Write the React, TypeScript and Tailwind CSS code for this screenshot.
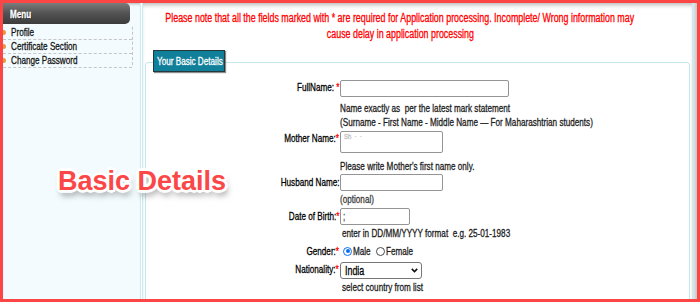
import React from "react";

type NP = { children: React.ReactNode; o?: string; className?: string };

function N({ children, o = "origin-left", className = "" }: NP) {
  return (
    <span className={"inline-block whitespace-nowrap scale-x-[0.74] [-webkit-text-stroke:0.3px_currentColor] " + o + " " + className}>
      {children}
    </span>
  );
}

const Star = () => <span className="text-[#ff0000]">*</span>;

function Label({ children, className = "" }: { children: React.ReactNode; className?: string }) {
  return (
    <div className={"w-[193px] shrink-0 flex justify-end text-[11px] leading-[14px] text-black " + className}>
      <N o="origin-right">{children}</N>
    </div>
  );
}

function Hint({ children, className = "" }: { children: React.ReactNode; className?: string }) {
  return (
    <div className={"text-[11px] leading-[14px] text-[#1c1c1c] " + className}>
      <N>{children}</N>
    </div>
  );
}

function Radio({ checked }: { checked?: boolean }) {
  return checked ? (
    <span className="w-[9px] h-[9px] shrink-0 rounded-full border-[1.5px] border-[#0b6ef5] bg-white flex items-center justify-center">
      <span className="w-[4px] h-[4px] rounded-full bg-[#0b6ef5]" />
    </span>
  ) : (
    <span className="w-[9px] h-[9px] shrink-0 rounded-full border border-[#4a4a4a] bg-white" />
  );
}

const menuItems = ["Profile", "Certificate Section", "Change Password"];

export default function App() {
  return (
    <div className="relative w-[700px] h-[302px] overflow-hidden border-[3px] border-[#fc4646] bg-white flex font-['Liberation_Sans',Arial,sans-serif]">
      {/* Sidebar */}
      <aside className="w-[138px] shrink-0 h-full bg-[#f3fbfe] border-r border-[#c8eef4] shadow-[inset_0_3px_3px_-2px_rgba(0,0,0,0.3)]">
        <div className="h-[21px] w-[127px] rounded-r-[5px] bg-linear-to-b from-[#7c7c7c] via-[#525252] to-[#3c3c3c] flex items-center pl-[7px] pt-[1px]">
          <N className="text-[11px] font-bold text-white [text-shadow:1px_1px_0_#222]">Menu</N>
        </div>
        <ul className="mt-[2px] w-[130px] border-r border-dashed border-[#c6c6c6] rounded-br-[3px]">
          {menuItems.map((t) => (
            <li key={t} className="h-[14px] flex items-center border-b border-dashed border-[#c6c6c6]">
              <span className="w-[3px] h-[5px] rounded-r-full bg-[#e8983a]" />
              <span className="ml-[5px] text-[11px] leading-[13px] text-[#141414]">
                <N>{t}</N>
              </span>
            </li>
          ))}
        </ul>
      </aside>

      {/* Main */}
      <div className="ml-[1px] flex-1 min-w-0 h-full flex">
        <main className="flex-1 min-w-0 h-full bg-white border-l border-r border-[#cdeaf0] shadow-[inset_0_4px_4px_-2px_rgba(0,0,0,0.28)]">
          <div className="pt-[7px] pr-[35px] flex flex-col items-center text-[12px] leading-[16px] text-[#ff0000]">
            <N o="origin-center">
              Please note that all the fields marked with * are required for Application processing. Incomplete/ Wrong information may
            </N>
            <N o="origin-center">cause delay in application processing</N>
          </div>

          <div className="mt-[8px] mx-[2px]">
            <div className="relative z-10 ml-[8px] -mb-[10px] w-[72px] h-[22px] bg-[#10809a] border border-[#26383c] shadow-[1px_1px_1px_rgba(0,0,0,0.45)] flex items-center pl-[3px]">
              <N className="text-[11px] leading-[14px] text-white">Your Basic Details</N>
            </div>
            <div className="border border-[#c3e7ee] rounded-[3px] pt-[17px] h-[300px]">
              {/* FullName */}
              <div className="flex">
                <Label>
                  FullName: <Star />
                </Label>
                <div className="ml-[1px] flex-1 min-w-0">
                  <div className="w-[169px] h-[17px] border border-[#949494] rounded-[2px] bg-white" />
                  <Hint className="mt-[4px]">Name exactly as&nbsp; per the latest mark statement</Hint>
                  <Hint>(Surname - First Name - Middle Name — For Maharashtrian students)</Hint>
                </div>
              </div>

              {/* Mother Name */}
              <div className="flex mt-[2px]">
                <Label>
                  Mother Name:<Star />
                </Label>
                <div className="ml-[1px] flex-1 min-w-0">
                  <div className="w-[103px] h-[22px] border border-[#949494] rounded-[2px] bg-white pl-[3px] text-[8px] leading-[10px] text-[#bdbdbd]">
                    <N>Sh&nbsp; · &nbsp;·</N>
                  </div>
                  <Hint className="mt-[6px]">Please write Mother's first name only.</Hint>
                </div>
              </div>

              {/* Husband Name */}
              <div className="flex mt-[1px]">
                <Label className="pt-[1px]">Husband Name:</Label>
                <div className="ml-[1px] flex-1 min-w-0">
                  <div className="w-[103px] h-[17px] border border-[#949494] rounded-[2px] bg-white" />
                  <Hint className="mt-[1px] text-[#3a3a3a]">(optional)</Hint>
                </div>
              </div>

              {/* Date of Birth */}
              <div className="flex mt-[2px]">
                <Label className="pt-[1px]">
                  Date of Birth:<Star />
                </Label>
                <div className="ml-[1px] flex-1 min-w-0">
                  <div className="w-[70px] h-[17px] border border-[#949494] rounded-[2px] bg-white pl-[2px] text-[11px] leading-[15px] text-[#555]">
                    <N>;</N>
                  </div>
                  <Hint className="mt-[1px] ml-[2px]">enter in DD/MM/YYYY format&nbsp; e.g. 25-01-1983</Hint>
                </div>
              </div>

              {/* Gender */}
              <div className="flex mt-[4px] h-[14px]">
                <Label>
                  Gender:<Star />
                </Label>
                <div className="ml-[4px] flex items-center text-[11px] leading-[14px] text-[#1c1c1c]">
                  <Radio checked />
                  <span className="ml-[1px] w-[23px]">
                    <N>Male</N>
                  </span>
                  <Radio />
                  <span className="ml-[1px]">
                    <N>Female</N>
                  </span>
                </div>
              </div>

              {/* Nationality */}
              <div className="flex mt-[4px]">
                <Label>
                  Nationality:<Star />
                </Label>
                <div className="ml-[1px] flex-1 min-w-0">
                  <div className="w-[82px] h-[17px] border border-[#767676] rounded-[3px] bg-white flex items-center justify-between pl-[4px] pr-[3px]">
                    <span className="text-[12px] leading-[14px] text-black">
                      <N>India</N>
                    </span>
                    <svg width="7" height="5" viewBox="0 0 7 5">
                      <path d="M0.8 0.9 L3.5 3.6 L6.2 0.9" fill="none" stroke="#111" strokeWidth="1.6" />
                    </svg>
                  </div>
                  <Hint className="mt-[1px] ml-[2px]">select country from list</Hint>
                </div>
              </div>
            </div>
          </div>
        </main>
        <div className="w-[4px] h-full bg-linear-to-r from-[#e3e9eb] to-[#c2c8ca]" />
      </div>

      {/* Overlay caption */}
      <div className="absolute left-[55px] top-[165px] text-[27px] leading-[27px] font-bold text-[#fb4747] whitespace-nowrap [text-shadow:2px_0_0_#fff,-2px_0_0_#fff,0_2px_0_#fff,0_-2px_0_#fff,2px_2px_0_#fff,-2px_2px_0_#fff,2px_-2px_0_#fff,-2px_-2px_0_#fff,3px_0_1px_#fff,-3px_0_1px_#fff,0_3px_1px_#fff,0_-3px_1px_#fff,2px_5px_6px_rgba(0,0,0,0.5)]">
        Basic Details
      </div>
    </div>
  );
}
